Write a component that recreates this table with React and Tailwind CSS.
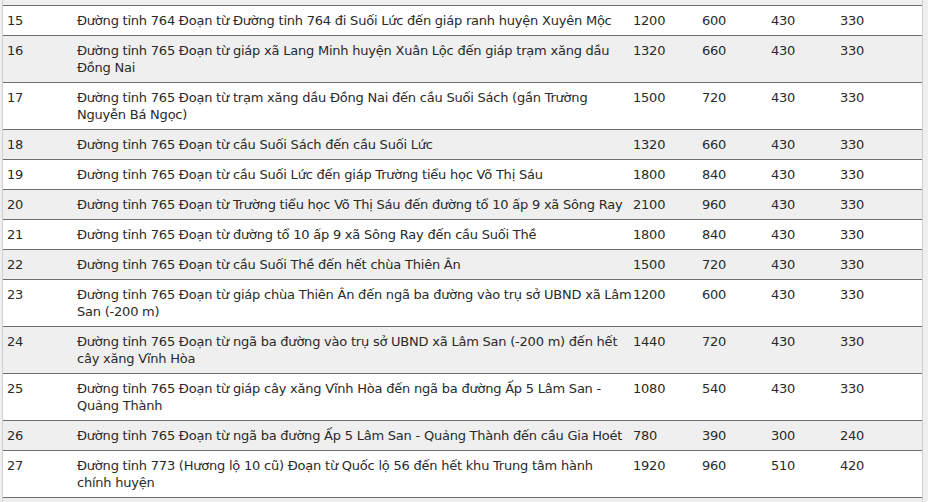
import React from 'react';

const rows = [
  { no: 15, name: ['Đường tỉnh 764 Đoạn từ Đường tỉnh 764 đi Suối Lức đến giáp ranh huyện Xuyên Mộc'], v: [1200, 600, 430, 330] },
  { no: 16, name: ['Đường tỉnh 765 Đoạn từ giáp xã Lang Minh huyện Xuân Lộc đến giáp trạm xăng dầu', 'Đồng Nai'], v: [1320, 660, 430, 330] },
  { no: 17, name: ['Đường tỉnh 765 Đoạn từ trạm xăng dầu Đồng Nai đến cầu Suối Sách (gần Trường', 'Nguyễn Bá Ngọc)'], v: [1500, 720, 430, 330] },
  { no: 18, name: ['Đường tỉnh 765 Đoạn từ cầu Suối Sách đến cầu Suối Lức'], v: [1320, 660, 430, 330] },
  { no: 19, name: ['Đường tỉnh 765 Đoạn từ cầu Suối Lức đến giáp Trường tiểu học Võ Thị Sáu'], v: [1800, 840, 430, 330] },
  { no: 20, name: ['Đường tỉnh 765 Đoạn từ Trường tiểu học Võ Thị Sáu đến đường tổ 10 ấp 9 xã Sông Ray'], v: [2100, 960, 430, 330] },
  { no: 21, name: ['Đường tỉnh 765 Đoạn từ đường tổ 10 ấp 9 xã Sông Ray đến cầu Suối Thề'], v: [1800, 840, 430, 330] },
  { no: 22, name: ['Đường tỉnh 765 Đoạn từ cầu Suối Thề đến hết chùa Thiên Ân'], v: [1500, 720, 430, 330] },
  { no: 23, name: ['Đường tỉnh 765 Đoạn từ giáp chùa Thiên Ân đến ngã ba đường vào trụ sở UBND xã Lâm', 'San (-200 m)'], v: [1200, 600, 430, 330] },
  { no: 24, name: ['Đường tỉnh 765 Đoạn từ ngã ba đường vào trụ sở UBND xã Lâm San (-200 m) đến hết', 'cây xăng Vĩnh Hòa'], v: [1440, 720, 430, 330] },
  { no: 25, name: ['Đường tỉnh 765 Đoạn từ giáp cây xăng Vĩnh Hòa đến ngã ba đường Ấp 5 Lâm San -', 'Quảng Thành'], v: [1080, 540, 430, 330] },
  { no: 26, name: ['Đường tỉnh 765 Đoạn từ ngã ba đường Ấp 5 Lâm San - Quảng Thành đến cầu Gia Hoét'], v: [780, 390, 300, 240] },
  { no: 27, name: ['Đường tỉnh 773 (Hương lộ 10 cũ) Đoạn từ Quốc lộ 56 đến hết khu Trung tâm hành', 'chính huyện'], v: [1920, 960, 510, 420] },
];

export default function App() {
  return (
    <div className="h-[502px] w-[928px] overflow-hidden bg-[#efefef] text-[13px] leading-[17px] tracking-[-0.22px] text-[#2a2a2a] [font-family:'DejaVu_Sans',sans-serif]">
      <div className="ml-[2px] w-[921px] border-l border-r border-[#cfcfcf]">
        <div className="h-[5px] bg-[#efefef]" />
        {rows.map((r, i) => (
          <div
            key={r.no}
            className={`grid grid-cols-[70px_556px_69px_69px_69px_86px] border-t border-[#6e6e6e] ${i % 2 === 0 ? 'bg-white' : 'bg-[#efefef]'}`}
          >
            <div className="py-[6px] pl-[4px]">{r.no}</div>
            <div className="whitespace-nowrap py-[6px] pl-[4px]">
              {r.name.map((line, j) => (
                <div key={j}>{line}</div>
              ))}
            </div>
            {r.v.map((x, j) => (
              <div key={j} className="py-[6px] pl-[4px]">{x}</div>
            ))}
          </div>
        ))}
        <div className="h-[10px] border-t border-[#6e6e6e] bg-[#efefef]" />
      </div>
    </div>
  );
}
